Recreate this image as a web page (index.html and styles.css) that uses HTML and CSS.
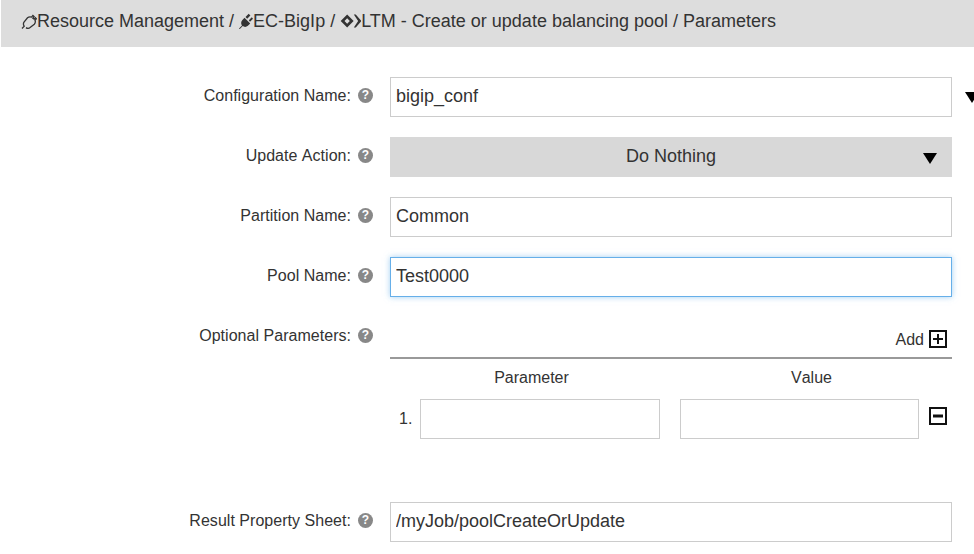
FILE: index.html
```html
<!DOCTYPE html>
<html lang="en">
<head>
<meta charset="utf-8">
<title>Parameters</title>
<link rel="stylesheet" href="styles.css">
</head>
<body>
<header class="crumbs">
  <svg class="ico" viewBox="0 0 16 16" width="16" height="16"><path d="M1 15.500l2.200-2.400c-.9-1.300-1-2.800-.2-4l3.500-4.300c1.200-1 2.600-1.200 4-.7l1.400-1.600 1.200 1.100-1.300 1.500 1.300 1.100 1.300-1.400 1 1-1.400 1.500c.6 1.400.3 2.900-.7 4l-4.200 3.300c-1.200.9-2.800.9-4.100 0" fill="none" stroke="#333" stroke-width="1.300"/></svg><span>Resource Management /&nbsp;</span>
  <svg class="ico" viewBox="0 0 14 16" width="14" height="16"><path d="M0 15.500l3-3.100c-1.300-1.800-1-3.800.2-5.200l2.300-2.400 5.700 5.700-2.300 2.300c-1.500 1.300-3.500 1.500-5.200.3l-3 3zM6.500 4l3.200-3.200 1.700 1.700-3.200 3.200zM9.800 7.300l3-3 1.200 1.400-3 3z" fill="#333"/></svg><span>EC-BigIp /&nbsp;</span>
  <svg class="ico" viewBox="0 0 22 16" width="21" height="16"><path d="M7.500 1.200L14.300 8l-6.800 6.800L.7 8zM7.500 5.200L4.700 8l2.800 2.800L10.300 8z" fill="#333" fill-rule="evenodd"/><path d="M14.500 1.200h2L22.500 8l-6 6.800h-2L19 8z" fill="#333"/></svg><span>LTM - Create or update balancing pool / Parameters</span>
</header>
<main class="form">
  <div class="row">
    <label class="lbl">Configuration Name:<i class="help">?</i></label>
    <div class="field">
      <input class="input" value="bigip_conf">
      <span class="arrow arrow-out"></span>
    </div>
  </div>
  <div class="row">
    <label class="lbl">Update Action:<i class="help">?</i></label>
    <div class="field">
      <div class="select">Do Nothing<span class="arrow arrow-in"></span></div>
    </div>
  </div>
  <div class="row">
    <label class="lbl">Partition Name:<i class="help">?</i></label>
    <div class="field"><input class="input" value="Common"></div>
  </div>
  <div class="row">
    <label class="lbl">Pool Name:<i class="help">?</i></label>
    <div class="field"><input class="input focus" value="Test0000"></div>
  </div>
  <div class="row row-opt">
    <label class="lbl">Optional Parameters:<i class="help">?</i></label>
    <div class="field">
      <div class="addbar">Add <svg class="box" viewBox="0 0 18 18" width="18" height="18"><rect x="1" y="1" width="16" height="16" fill="none" stroke="#111" stroke-width="2"/><path d="M9 4v10M4 9h10" stroke="#111" stroke-width="2"/></svg></div>
      <div class="heads"><span class="h-param">Parameter</span><span class="h-value">Value</span></div>
      <div class="pair">
        <span class="num">1.</span>
        <input class="input in-param">
        <input class="input in-value">
        <svg class="box box-minus" viewBox="0 0 18 18" width="18" height="18"><rect x="1" y="1" width="16" height="16" fill="none" stroke="#111" stroke-width="2"/><path d="M4 9h10" stroke="#111" stroke-width="3"/></svg>
      </div>
    </div>
  </div>
  <div class="row">
    <label class="lbl">Result Property Sheet:<i class="help">?</i></label>
    <div class="field"><input class="input" value="/myJob/poolCreateOrUpdate"></div>
  </div>
</main>
</body>
</html>
```
FILE: styles.css
```css
* { box-sizing: border-box; }
html, body { margin: 0; padding: 0; }
body {
  width: 974px;
  height: 554px;
  overflow: hidden;
  background: #fff;
  color: #333;
  font-family: "Liberation Sans", Arial, sans-serif;
  font-size: 16px;
  font-kerning: none;
}
.crumbs {
  margin-left: 1px;
  height: 47px;
  background: #ddd;
  padding: 0 0 5px 20px;
  display: flex;
  align-items: center;
  font-size: 18px;
  font-kerning: normal;
  white-space: nowrap;
}
.ico { flex: none; }
.form {
  padding-top: 30px;
  display: flex;
  flex-direction: column;
}
.row {
  display: flex;
  height: 40px;
  margin-bottom: 20px;
}
.lbl {
  width: 390px;
  padding-right: 17px;
  display: flex;
  justify-content: flex-end;
  align-items: center;
  height: 37px;
  color: #333;
  letter-spacing: .03px;
}
.help {
  width: 15px;
  height: 15px;
  margin-left: 7px;
  border-radius: 50%;
  background: #888;
  color: #fff;
  font: bold 12px/15px "Liberation Sans", Arial, sans-serif;
  text-align: center;
  flex: none;
}
.field {
  width: 562px;
  position: relative;
}
.input {
  display: block;
  width: 100%;
  height: 40px;
  border: 1px solid #ccc;
  background: #fff;
  padding: 0 5px 2px;
  font: 18px "Liberation Sans", Arial, sans-serif;
  color: #333;
  outline: none;
}
.focus {
  border-color: #66afe9;
  box-shadow: 0 0 6px rgba(102, 175, 233, .6);
}
.select {
  height: 40px;
  background: #d8d8d8;
  text-align: center;
  font-size: 18px;
  line-height: 38px;
  color: #333;
  position: relative;
}
.arrow {
  position: absolute;
  width: 0;
  height: 0;
  border-left: 7px solid transparent;
  border-right: 7px solid transparent;
  border-top: 11px solid #000;
}
.arrow-in { right: 15px; top: 16px; }
.arrow-out { left: 575px; top: 15px; }
.row-opt { height: 165px; }
.addbar {
  height: 42px;
  border-bottom: 2px solid #999;
  display: flex;
  justify-content: flex-end;
  align-items: flex-start;
  gap: 5px;
  padding: 12px 5px 0 0;
  line-height: 22px;
}
.addbar .box { margin-top: 1px; }
.heads {
  display: flex;
  height: 40px;
  line-height: 38px;
}
.h-param { margin-left: 30px; width: 223px; text-align: center; }
.h-value { margin-left: 60px; width: 217px; text-align: center; }
.pair {
  display: flex;
  align-items: center;
}
.num { width: 30px; padding-left: 9px; font-size: 16px; }
.in-param { width: 240px; margin-right: 20px; }
.in-value { width: 239px; margin-right: 10px; }
.box-minus { margin-top: -6px; }
```
